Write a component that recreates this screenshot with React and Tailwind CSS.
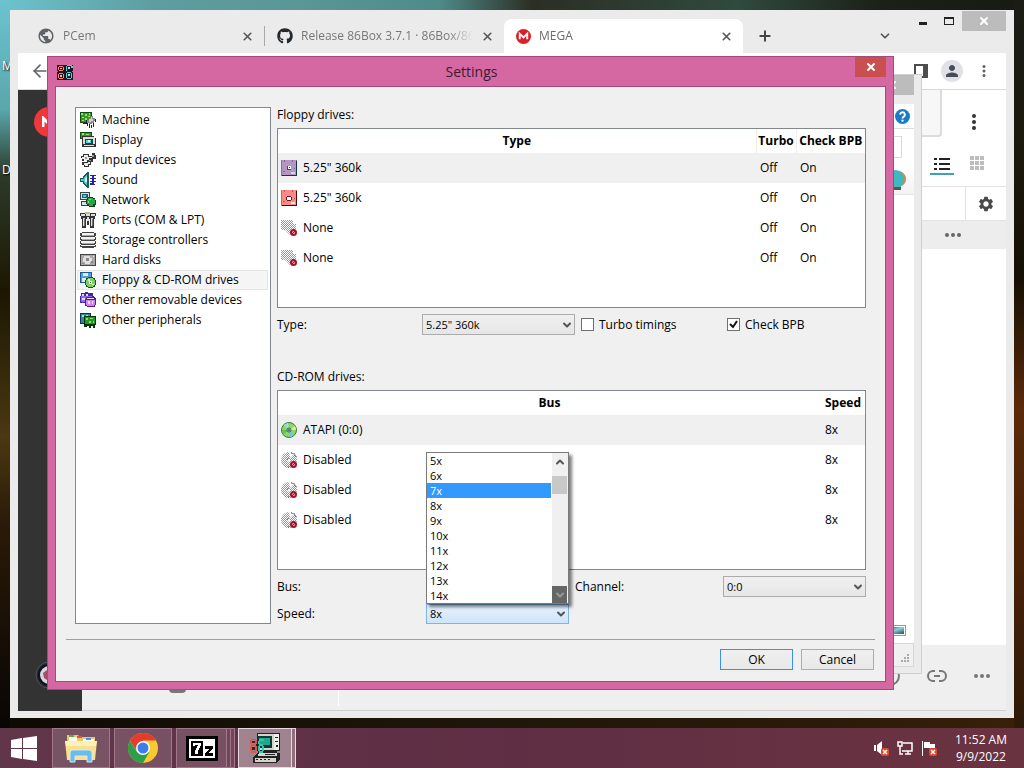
import React from 'react';
import { ArrowLeft, ChevronDown, ChevronUp, Plus, X } from 'lucide-react';
import { FaGithub } from 'react-icons/fa';
import { MdSettings, MdPerson, MdPublic } from 'react-icons/md';

// 16x16 pixel icons, each one a list of [fill, path]
const pixelIcons = {
  machine: [
    ['#0a4d14', 'M0 0h12v11H0z'],
    ['#2a9a32', 'M1 1h10v9H1z'],
    ['#9be35a', 'M1 1h2v2H1zM5 2h2v2H5zM9 1h1v2H9zM5 6h2v2H5z'],
    ['#e8cc30', 'M2 5h2v1H2zM8 4h2v1H8zM2 8h2v1H2z'],
    ['#222', 'M7 11h1v3H7zM9 12h1v4H9zM11 13h1v3h-1zM13 11h1v4h-1zM3 11h5v1H3zM6 8h1v3H6zM15 7h1v3h-1z'],
    ['#8a8a8a', 'M7 8h2V6h2V4h2v2h2v3h-1v2h-2v1H9v-1H7z'],
    ['#d0d0d0', 'M9 7h2V5h1v2h1v2h-2v1H9z'],
  ],
  display: [
    ['#0a4d14', 'M0 0h12v7H0z'],
    ['#2a9a32', 'M1 1h10v5H1z'],
    ['#9be35a', 'M2 1h2v2H2zM6 2h3v1H6z'],
    ['#333', 'M2 4h12v2h2v9H2z'],
    ['#deded6', 'M3 5h11v1h1v6H3zM4 13h10v1H4z'],
    ['#0b4b50', 'M5 7h8v5H5z'],
    ['#58d8d8', 'M6 8h5v3H6z'],
    ['#fff', 'M8 8h2v2H8z'],
  ],
  input: [
    ['#333', 'M3 2h6v2h3V1h3v2h1v4h-3v3h-2v3H9v2H4v-2H2v-3h5V9H2V6H1V4h2z'],
    ['#ececec', 'M4 3h4v2h4v1H9v2H7v1H4V7H2V5h2zM4 11h4v-1h2v2H8v2H5v-1H4z'],
    ['#999', 'M5 5h2v2H5zM12 3h2v2h-2zM9 8h2v1H9z'],
  ],
  sound: [
    ['#1a5a60', 'M0 6h3V4h1V3h1V2h1V1h1V0h2v16H7v-1H6v-1H5v-1H4v-1H3v-2H0z'],
    ['#5ec8c8', 'M1 7h3V5h1V4h1V3h1v10H6v-1H5v-1H4V9H1z'],
    ['#c9f4f0', 'M5 6h1V5h1v5H5z'],
    ['#2424a0', 'M10 3h6v1h-2v2h2v1h-2v2h2v1h-2v2h1v1h-5v-2h2v-1h-2V9h2V7h-2V6h2V4h-2z'],
  ],
  network: [
    ['#344', 'M0 0h10v8H0zM1 9h9v5H1z'],
    ['#d4e4e4', 'M1 1h8v6H1zM2 10h7v3H2z'],
    ['#17606a', 'M2 2h6v4H2z'],
    ['#5ac8d0', 'M3 3h3v2H3z'],
    ['#0b4518', 'M8 5h5v1h2v2h1v5h-1v2h-6v-1H7v-2H6V8h1V6h1z'],
    ['#28a548', 'M8 6h5v1h2v5h-2v2H9v-2H7V8h1z'],
    ['#8be088', 'M9 7h2v1H9zM8 9h1v2H8z'],
  ],
  ports: [
    ['#333', 'M0 1h16v3h-1v3h-1v9h-4V7H9v6H7V7H6v9H2V7H1V4H0z'],
    ['#ddd', 'M1 2h4v2H1zM6 2h4v2H6zM11 2h4v2h-4zM3 6h2v8H3zM11 6h2v8h-2zM7 5h2v4H7z'],
    ['#c8bc80', 'M5 0h5v2H5z'],
    ['#777', 'M4 7h1v7H4zM12 7h1v7h-1z'],
  ],
  storage: [
    ['#444', 'M2 0h12v1h2v3h-1v1h1v3h-1v1h1v3h-1v1h1v2h-2v1H2v-1H0v-2h1v-1H0V9h1V8H0V5h1V4H0V1h2z'],
    ['#f2f2f2', 'M2 1h12v2H2zM1 5h14v2H1zM1 9h14v2H1zM1 13h14v1H1z'],
    ['#aaa', 'M2 3h12v1H2zM2 7h12v1H2zM2 11h12v1H2z'],
  ],
  hdd: [
    ['#444', 'M0 2h16v12H0z'],
    ['#a8a8a8', 'M1 3h14v10H1z'],
    ['#e0e0e0', 'M4 4h6v2h2v4h-2v2H5v-2H3V6h1zM13 4h1v1h-1z'],
    ['#888', 'M6 6h3v3H6zM11 9h2v2h-2zM2 11h2v1H2z'],
  ],
  floppyCd: [
    ['#1f5a94', 'M0 0h12v11H0z'],
    ['#4d9fdc', 'M1 1h10v9H1z'],
    ['#d8ecfa', 'M3 1h5v3H3zM2 6h4v4H2z'],
    ['#17521f', 'M8 5h5v1h2v2h1v5h-1v2h-2v1H8v-1H6v-2H5V8h1V6h2z'],
    ['#7fce6a', 'M8 6h5v1h1v1h1v5h-1v1h-1v1H8v-1H7v-1H6V8h1V7h1z'],
    ['#d8f5c8', 'M8 7h2v2H8zM12 12h2v1h-2z'],
    ['#fff', 'M9 9h3v3H9z'],
    ['#17521f', 'M10 10h1v1h-1z'],
  ],
  removable: [
    ['#4527a0', 'M1 1h4V0h3v1h5v3h1v7H0V4h1z'],
    ['#8a6ee8', 'M1 4h11v6H1z'],
    ['#e0d8ff', 'M2 2h2v2H2zM6 2h2v2H6zM2 6h3v2H2z'],
    ['#5a1a80', 'M6 5h9v1h1v7h-1v2H7v-1H5V7h1z'],
    ['#cf86ec', 'M7 8h8v5h-1v1H7v-1H6V8z'],
    ['#f4dcff', 'M7 6h7v1H7zM8 9h2v3H8zM12 9h1v3h-1z'],
  ],
  peripherals: [
    ['#12305c', 'M0 1h11v11H0z'],
    ['#2b8b9c', 'M1 2h9v9H1z'],
    ['#9fe0e8', 'M2 3h2v2H2zM6 3h2v1H6z'],
    ['#063306', 'M4 4h12v9h-1v3h-2v-2h-2v2H9v-2H7v1H4z'],
    ['#1f9a2a', 'M5 5h10v7H5z'],
    ['#8be060', 'M6 6h2v2H6zM10 6h3v1h-3zM9 9h2v2H9zM13 9h1v2h-1z'],
  ],
  floppyPurple: [
    ['#8a6a9c', 'M0 0h16v16H0z'],
    ['#b595c2', 'M1 0h14v15H1z'],
    ['#7d6490', 'M3 0h1v2H3zM11 0h1v2h-1zM2 11h2v1H2zM13 8h1v1h-1z'],
    ['#c8d8e0', 'M10 12h4v2h-4z'],
    ['#123848', 'M15 1h1v15H1v-1h14z'],
    ['#5a3a60', 'M6 6h4v4H6z'],
    ['#fff', 'M7 6h3v3H7z'],
    ['#5a3a60', 'M8 7h1v1H8z'],
  ],
  floppyRed: [
    ['#d86060', 'M0 0h16v16H0z'],
    ['#f98a88', 'M1 0h14v15H1z'],
    ['#c85050', 'M3 0h1v2H3zM11 0h1v2h-1zM2 11h2v1H2zM13 8h1v1h-1z'],
    ['#fbe4d0', 'M10 12h4v2h-4z'],
    ['#401010', 'M15 1h1v15H1v-1h14z'],
    ['#601818', 'M5 6h6v5H5z'],
    ['#fff', 'M6 7h4v3H6z'],
    ['#f98a88', 'M5 6h1v1H5zM10 6h1v1h-1zM5 10h1v1H5zM10 10h1v1h-1z'],
  ],
  // "86" in two pairs of rings, warm on the left and teal on the right
  app: [
    ['#2a1020', 'M0 1h16v6h-1v1h1v8H0V8h1V7H0z'],
    ['#ff8878', 'M2 2h4v1H2zM1 3h1v3H1zM6 3h1v3H6zM2 6h4v1H2zM2 9h4v1H2zM1 10h1v4H1zM6 10h1v4H6zM2 14h4v1H2z'],
    ['#f4d050', 'M3 4h2v1H3zM3 11h2v2H3z'],
    ['#48d8d8', 'M10 1h5v1h-5zM9 2h1v5H9zM14 2h2v2h-2zM10 8h4v1h-4zM9 9h1v5H9zM14 9h1v5h-1zM10 14h4v1h-4z'],
    ['#9af0e8', 'M11 3h2v2h-2zM11 10h2v2h-2z'],
  ],
};

const sections = [
  ['machine', 'Machine'],
  ['display', 'Display'],
  ['input', 'Input devices'],
  ['sound', 'Sound'],
  ['network', 'Network'],
  ['ports', 'Ports (COM & LPT)'],
  ['storage', 'Storage controllers'],
  ['hdd', 'Hard disks'],
  ['floppyCd', 'Floppy & CD-ROM drives'],
  ['removable', 'Other removable devices'],
  ['peripherals', 'Other peripherals'],
];

const floppyDrives = [
  { icon: 'floppyPurple', type: '5.25" 360k' },
  { icon: 'floppyRed', type: '5.25" 360k' },
  { icon: 'none', type: 'None' },
  { icon: 'none', type: 'None' },
];

const cdromDrives = ['ATAPI (0:0)', 'Disabled', 'Disabled', 'Disabled'];

const speeds = ['5x', '6x', '7x', '8x', '9x', '10x', '11x', '12x', '13x', '14x'];

function PixelIcon({ name }) {
  return (
    <svg className="w-4 h-4 shrink-0" viewBox="0 0 16 16" shapeRendering="crispEdges" aria-hidden="true">
      {pixelIcons[name].map(([fill, d], i) => (
        <path key={i} fill={fill} d={d} />
      ))}
    </svg>
  );
}

// Dithered shape with the red "disabled" badge
function DisabledIcon({ round }) {
  return (
    <svg className="w-4 h-4 shrink-0" viewBox="0 0 16 16" aria-hidden="true">
      <defs>
        <pattern id="dither" width="2" height="2" patternUnits="userSpaceOnUse">
          <rect width="2" height="2" fill="#fff" />
          <path fill="#999" d="M0 0h1v1H0zM1 1h1v1H1z" />
        </pattern>
      </defs>
      {round ? <circle cx="8" cy="8" r="8" fill="url(#dither)" /> : <path d="M0 0h12v4h3v5l-6 6-5-5H0z" fill="url(#dither)" />}
      {round && <path d="M8 0l1 6 4-4zM6 8l2-2 2 2-2 2z" fill="#fff" />}
      {round && <path d="M10 1h2v1h2v2h1v2M6 8l2-2 2 2M7 15h2" fill="none" stroke="#444" strokeDasharray="1 1" />}
      <circle cx="12.500" cy="12.500" r="3.500" fill="#a3142c" />
      <circle cx="12.500" cy="12.500" r="1.500" fill="#f0a0aa" />
      <path d="M11 14l3-3" stroke="#a3142c" strokeWidth="1" />
    </svg>
  );
}

function DiscIcon() {
  return (
    <svg className="w-4 h-4 shrink-0" viewBox="0 0 16 16" aria-hidden="true">
      <circle cx="8" cy="8" r="7.500" fill="#8fd468" stroke="#3f7a3a" />
      <path d="M8 8L3 3a7 7 0 0 1 4-2z" fill="#8fe0ee" />
      <path d="M8 8l5 5a7 7 0 0 1-4 2z" fill="#6cc8e0" />
      <path d="M8 8l6-4a7 7 0 0 1 1 4z" fill="#d4f280" />
      <path d="M8 8l-6 4a7 7 0 0 1-1-4z" fill="#5fbf50" />
      <circle cx="8" cy="8" r="2" fill="#e8f8f0" stroke="#2c5a5a" />
      <circle cx="8" cy="8" r="1" fill="#2c5a5a" />
    </svg>
  );
}

function Dots({ vertical, className }) {
  return (
    <svg className={className} viewBox="0 0 16 16" fill="currentColor" aria-hidden="true">
      <circle cx={vertical ? 8 : 2} cy={vertical ? 2 : 8} r="2" />
      <circle cx="8" cy="8" r="2" />
      <circle cx={vertical ? 8 : 14} cy={vertical ? 14 : 8} r="2" />
    </svg>
  );
}

function MegaIcon({ className }) {
  return (
    <svg className={className} viewBox="0 0 16 16" aria-hidden="true">
      <circle cx="8" cy="8" r="8" fill="#dc1f26" />
      <path d="M4 11V5l4 4 4-4v6" fill="none" stroke="#fff" strokeWidth="2" />
    </svg>
  );
}

function SelectBox({ id, options, value, className, open }) {
  return (
    <div className={`grid items-center ${className}`}>
      <select
        id={id}
        defaultValue={value}
        className={
          open
            ? 'col-start-1 row-start-1 w-full h-5 appearance-none border border-[#7eb4ea] bg-linear-to-b from-[#e6f1fc] to-[#cfe5fb] pl-[3px] text-[11px] leading-4'
            : 'col-start-1 row-start-1 w-full h-[21px] appearance-none border border-[#acacac] bg-linear-to-b from-[#f0f0f0] to-[#e6e6e6] pl-[3px] text-[11px] leading-4'
        }
      >
        {options.map((option) => (
          <option key={option}>{option}</option>
        ))}
      </select>
      <ChevronDown className="col-start-1 row-start-1 justify-self-end mr-[2px] w-3 h-3 text-[#555] pointer-events-none" strokeWidth={4} />
    </div>
  );
}

function BrowserTab({ icon, title, active }) {
  return (
    <div
      className={
        active
          ? 'flex items-center h-[34px] w-[239px] min-w-0 pl-3 pr-[10px] rounded-t-lg bg-white text-[#6b6b6b]'
          : 'flex items-center h-[34px] w-[239px] min-w-0 pl-3 pr-[10px] text-[#777]'
      }
    >
      {icon}
      <span className="flex-1 min-w-0 mx-2 overflow-hidden whitespace-nowrap text-[12px] mask-r-from-85%">{title}</span>
      <button aria-label={`Close ${title}`}>
        <X className="w-[13px] h-[13px] text-[#555]" strokeWidth={3} />
      </button>
    </div>
  );
}

function BrowserWindow() {
  return (
    <div className="absolute inset-[10px] flex flex-col bg-[#ebebeb] px-2 pb-[7px]">
      <div className="flex items-end h-[43px]">
        <div className="flex flex-1 min-w-0 items-end pl-[7px]">
          <BrowserTab icon={<MdPublic className="w-[18px] h-[18px] shrink-0 text-[#5f6368]" />} title="PCem" />
          <div className="h-5 w-px mb-[7px] bg-[#a8a8a8]" />
          <BrowserTab icon={<FaGithub className="w-4 h-4 shrink-0 text-[#24292e]" />} title="Release 86Box 3.7.1 · 86Box/86Box" />
          <BrowserTab icon={<MegaIcon className="w-[15px] h-[15px] shrink-0" />} title="MEGA" active />
          <button aria-label="New tab" className="h-[34px] ml-[14px]">
            <Plus className="w-4 h-4 text-[#444]" strokeWidth={3} />
          </button>
        </div>
        <button aria-label="Search tabs" className="h-[34px] w-[26px] mr-[11px] flex items-center justify-center">
          <ChevronDown className="w-[14px] h-[14px] text-[#555]" strokeWidth={3} />
        </button>
        <div className="flex self-start h-[21px] pt-px">
          <button aria-label="Minimize" className="w-[27px] flex justify-center items-center pt-1">
            <span className="w-2 h-[3px] bg-[#222]" />
          </button>
          <button aria-label="Maximize" className="w-[26px] flex justify-center items-center">
            <span className="w-[10px] h-2 border border-t-2 border-[#222]" />
          </button>
          <button aria-label="Close" className="w-11 flex justify-center items-center bg-[#bcbcbc]">
            <X className="w-3 h-3 text-white" strokeWidth={4} />
          </button>
        </div>
      </div>

      <div className="flex items-center justify-between h-[37px] pl-3 pr-[14px] bg-white border-b border-[#dadada]">
        <ArrowLeft className="w-5 h-5 text-[#5f6368]" />
        <div className="flex items-center gap-[13px]">
          <span className="w-[14px] h-[14px] border-2 border-r-[5px] border-[#4d4d4d]" />
          <span className="w-[22px] h-[22px] rounded-full bg-[#dfe1e6] flex items-center justify-center">
            <MdPerson className="w-[18px] h-[18px] text-[#474c59]" />
          </span>
          <Dots vertical className="w-4 h-3 text-[#5f6368]" />
        </div>
      </div>

      <div className="flex flex-1 min-h-0 bg-white">
        <div className="flex flex-col justify-between w-16 pt-[17px] pb-[22px] pl-4 bg-[#333]">
          <div className="w-[30px] h-[30px] rounded-full bg-[#f0373a] flex items-center pl-2">
            <svg className="w-[14px] h-3" viewBox="0 0 14 12" aria-hidden="true">
              <path d="M1 11V2l6 6 6-6v9" fill="none" stroke="#fff" strokeWidth="3" />
            </svg>
          </div>
          <svg className="w-7 h-7" viewBox="0 0 28 28" aria-hidden="true">
            <circle cx="15" cy="14" r="13" fill="#222636" stroke="#50525c" />
            <circle cx="15" cy="14" r="10" fill="#d6d6de" stroke="#10121e" strokeWidth="2" />
            <path d="M9 12l4-3v10l-3-2z" fill="#a05060" />
          </svg>
        </div>
        <div className="flex flex-col flex-1 border-b border-[#d0d0d0]">
          <div className="flex justify-end h-16 pr-6">
            <div className="w-28 h-[47px] bg-[#f7f7f7] border-r-2 border-b-2 border-[#dcdcdc] rounded-br-sm" />
            <Dots vertical className="self-center ml-6 w-4 h-4 text-[#333]" />
          </div>
          <div className="flex justify-end h-[33px] pr-[17px] gap-[11px] border-b border-[#e2e2e2]">
            <div className="flex items-center justify-center w-6 h-[21px] border-b-2 border-[#3ea3ab]">
              <svg className="w-4 h-[14px]" viewBox="0 0 16 14" fill="#222" aria-hidden="true">
                <path d="M0 1h3v2H0zM5 1h11v2H5zM0 6h3v2H0zM5 6h11v2H5zM0 11h3v2H0zM5 11h11v2H5z" />
              </svg>
            </div>
            <div className="flex items-center justify-center w-6 h-[18px]">
              <svg className="w-[14px] h-[14px]" viewBox="0 0 14 14" fill="#bdbdbd" aria-hidden="true">
                <path d="M0 0h4v4H0zM5 0h4v4H5zM10 0h4v4h-4zM0 5h4v4H0zM5 5h4v4H5zM10 5h4v4h-4zM0 10h4v4H0zM5 10h4v4H5zM10 10h4v4h-4z" />
              </svg>
            </div>
          </div>
          <div className="flex justify-end h-[34px] border-b border-[#e2e2e2]">
            <div className="flex items-center justify-center w-[41px] border-l border-[#e2e2e2]">
              <MdSettings className="w-[18px] h-[18px] text-[#4a4a4a]" />
            </div>
          </div>
          <div className="flex justify-end items-center h-7 pr-[45px] bg-[#ededed]">
            <Dots className="w-4 h-4 text-[#666]" />
          </div>
          <div className="flex-1" />
          <div className="flex items-center h-[65px] pr-4 pb-1 bg-[#efefef]">
            <div className="w-[17px] h-[34px] ml-[87px] rounded-sm bg-[#777]" />
            <div className="self-stretch w-px ml-[152px] bg-white" />
            <div className="flex flex-1 justify-end items-center gap-[27px] text-[#777]">
              <span className="w-5 h-5 rounded-full border-2 border-[#777]" />
              <svg className="w-5 h-5" viewBox="0 0 20 20" fill="none" stroke="currentColor" strokeWidth="2" aria-hidden="true">
                <path d="M8 5H6a5 5 0 0 0 0 10h2M12 5h2a5 5 0 0 1 0 10h-2M7 10h6" />
              </svg>
              <Dots className="w-4 h-4" />
            </div>
          </div>
        </div>
      </div>
    </div>
  );
}

function ExplorerWindow() {
  return (
    <div className="absolute right-[102px] top-[74px] bottom-[54px] w-72 flex flex-col bg-[#ebebeb] border border-[#cfcfcf] pr-[7px] pb-[6px]">
      <div className="flex justify-end h-[29px]">
        <button aria-label="Close" className="w-11 h-5 flex items-center justify-center bg-[#bcbcbc]">
          <X className="w-3 h-3 text-white" strokeWidth={4} />
        </button>
      </div>
      <div className="flex items-center justify-end h-[25px] pr-1 bg-white border-b border-[#ddd]">
        <svg className="w-[15px] h-[15px]" viewBox="0 0 16 16" aria-hidden="true">
          <circle cx="8" cy="8" r="8" fill="#1a7bcb" />
          <path d="M5.500 6a2.500 2.500 0 1 1 3.500 2.300c-.7.300-1 .7-1 1.700" fill="none" stroke="#fff" strokeWidth="2" />
          <circle cx="8" cy="12.500" r="1.200" fill="#fff" />
        </svg>
      </div>
      <div className="h-9 py-[7px] pr-3 bg-white">
        <div className="h-[22px] border border-[#d9d9d9]" />
      </div>
      <div className="flex items-center justify-end h-[30px] pr-2 bg-linear-to-b from-white to-[#f3f3f3] border-b border-[#e4e4e4]">
        <svg className="w-[22px] h-[22px]" viewBox="0 0 22 22" aria-hidden="true">
          <path d="M10 1c7 0 12 4 12 9 0 3-2 6-5 7v4h-7z" fill="#3fb8c0" />
          <path d="M15 2c4 1 7 4 7 8 0 3-2 6-5 7 2-2 3-4 3-7s-2-6-5-8z" fill="#d98a4a" />
          <path d="M10 21v-3h7v3z" fill="#6a5040" />
        </svg>
      </div>
      <div className="flex flex-1 items-end justify-end pr-2 pb-[7px] bg-white">
        <div className="w-6 h-[11px] p-px border border-[#6aa7b8]">
          <div className="h-full bg-linear-to-br from-[#1d3d58] via-[#8fd0dc] to-[#1f5060]" />
        </div>
      </div>
      <div className="flex items-end justify-end h-6 pr-1 pb-1 bg-[#f0f0f0] border border-[#d8d8d8]">
        <svg className="w-2 h-2" viewBox="0 0 8 8" fill="#aaa" aria-hidden="true">
          <path d="M6 0h2v2H6zM3 3h2v2H3zM6 3h2v2H6zM0 6h2v2H0zM3 6h2v2H3zM6 6h2v2H6z" />
        </svg>
      </div>
    </div>
  );
}

function FloppyTable() {
  return (
    <div className="h-[180px] bg-white border border-[#828790]">
      <table className="w-full table-fixed border-collapse" aria-label="Floppy drives">
        <thead>
          <tr className="h-6">
            <th>Type</th>
            <th className="w-10 border-l border-[#eee]">Turbo</th>
            <th className="w-[69px] border-l border-[#eee]">Check BPB</th>
          </tr>
        </thead>
        <tbody>
          {floppyDrives.map((drive, index) => (
            <tr key={index} className={index === 0 ? 'h-[30px] bg-[#f0f0f0]' : 'h-[30px]'}>
              <td className="pl-[3px]">
                <div className="flex items-center gap-[6px]">
                  {drive.icon === 'none' ? <DisabledIcon /> : <PixelIcon name={drive.icon} />}
                  {drive.type}
                </div>
              </td>
              <td className="pl-1">Off</td>
              <td className="pl-1">On</td>
            </tr>
          ))}
        </tbody>
      </table>
    </div>
  );
}

function CdromTable() {
  return (
    <div className="h-[180px] bg-white border border-[#828790]">
      <table className="w-full table-fixed border-collapse" aria-label="CD-ROM drives">
        <thead>
          <tr className="h-6">
            <th>Bus</th>
            <th className="w-11">Speed</th>
          </tr>
        </thead>
        <tbody>
          {cdromDrives.map((drive, index) => (
            <tr key={index} className={index === 0 ? 'h-[30px] bg-[#f0f0f0]' : 'h-[30px]'}>
              <td className="pl-[3px]">
                <div className="flex items-center gap-[6px]">
                  {index === 0 ? <DiscIcon /> : <DisabledIcon round />}
                  {drive}
                </div>
              </td>
              <td className="pl-1">8x</td>
            </tr>
          ))}
        </tbody>
      </table>
    </div>
  );
}

function SpeedPopup() {
  return (
    <div className="absolute left-0 right-0 bottom-full flex bg-white border border-[#7a7a7a] shadow-[3px_3px_3px_rgba(0,0,0,0.5)]">
      <ul role="listbox" aria-label="Speed" className="flex-1 text-[11px] leading-[15px]">
        {speeds.map((speed) => (
          <li
            key={speed}
            role="option"
            aria-selected={speed === '7x'}
            className={speed === '7x' ? 'pl-[3px] mr-px bg-[#3399ff] text-white' : 'pl-[3px]'}
          >
            {speed}
          </li>
        ))}
      </ul>
      <div className="flex flex-col w-4 bg-[#f0f0f0]">
        <span className="h-[17px] flex items-center justify-center">
          <ChevronUp className="w-3 h-3 text-[#555]" strokeWidth={4} />
        </span>
        <span className="h-[18px] mt-[6px] mr-px bg-[#c8c8c8]" />
        <span className="h-[17px] mt-auto mr-px flex items-center justify-center bg-[#666]">
          <ChevronDown className="w-3 h-3 text-[#999]" strokeWidth={4} />
        </span>
      </div>
    </div>
  );
}

function CheckBox({ label, checked, className }) {
  return (
    <label className={`flex items-center gap-[5px] ${className ?? ''}`}>
      <span className="grid place-items-center">
        <input
          type="checkbox"
          defaultChecked={checked}
          className="peer col-start-1 row-start-1 appearance-none w-[13px] h-[13px] bg-white border border-[#707070]"
        />
        <svg className="col-start-1 row-start-1 hidden peer-checked:block w-[11px] h-[11px] pointer-events-none" viewBox="0 0 11 11" aria-hidden="true">
          <path d="M2 5l3 3 4-6" fill="none" stroke="#111" strokeWidth="2" />
        </svg>
      </span>
      {label}
    </label>
  );
}

function SettingsWindow() {
  return (
    <div className="absolute left-[47px] right-[130px] top-[56px] flex flex-col bg-[#d568a2] border border-[#a34a7c] px-[7px] pb-[7px] text-[12px] leading-4 text-black">
      <div className="grid grid-cols-[1fr_auto_1fr] items-center h-[29px] pl-[2px]">
        <PixelIcon name="app" />
        <h1 className="text-[14px] text-[#3c1a30]">Settings</h1>
        <button aria-label="Close" className="justify-self-end self-start w-[31px] h-5 flex items-center justify-center bg-[#c94f51]">
          <X className="w-3 h-3 text-white" strokeWidth={4} />
        </button>
      </div>

      <div className="bg-[#f0f0f0] border border-[#a34a7c] pt-5 pb-[11px]">
        <div className="flex gap-[6px] px-[19px]">
          <ul className="w-[196px] shrink-0 bg-white border border-[#828790] pt-[2px] pl-px pr-[2px]">
            {sections.map(([icon, label]) => (
              <li
                key={label}
                className={
                  icon === 'floppyCd'
                    ? 'flex items-center gap-[6px] h-5 pl-[2px] bg-[#f5f5f5] border border-[#e6e6e6]'
                    : 'flex items-center gap-[6px] h-5 pl-[2px] border border-transparent'
                }
              >
                <PixelIcon name={icon} />
                {label}
              </li>
            ))}
          </ul>

          <div className="flex-1 min-w-0">
            <h2 className="mb-[5px]">Floppy drives:</h2>
            <FloppyTable />
            <div className="flex items-center mt-[6px]">
              <label htmlFor="floppy-type" className="w-[145px]">Type:</label>
              <SelectBox id="floppy-type" className="w-[153px]" value={'5.25" 360k'} options={['None', '5.25" 360k']} />
              <CheckBox label="Turbo timings" className="ml-[6px] w-[146px]" />
              <CheckBox label="Check BPB" checked />
            </div>

            <h2 className="mt-[34px] mb-[5px]">CD-ROM drives:</h2>
            <CdromTable />
            <div className="flex items-center mt-[6px]">
              <span className="flex-1">Bus:</span>
              <label htmlFor="channel" className="w-[148px]">Channel:</label>
              <SelectBox id="channel" className="w-[143px]" value="0:0" options={['0:0', '0:1', '1:0', '1:1']} />
            </div>
            <div className="flex items-center mt-[7px]">
              <label htmlFor="speed" className="w-[149px]">Speed:</label>
              <div className="relative w-[143px]">
                <SelectBox id="speed" value="8x" options={speeds} className="w-full" open />
                <SpeedPopup />
              </div>
            </div>
          </div>
        </div>

        <div className="mt-[15px] mx-[10px] border-t border-[#a0a0a0]" />
        <div className="flex justify-end gap-2 mt-[9px] pr-[11px]">
          <button className="w-[73px] h-[21px] border border-[#3c8ee6] bg-linear-to-b from-[#f0f0f0] to-[#e8e8e8]">OK</button>
          <button className="w-[73px] h-[21px] border border-[#acacac] bg-linear-to-b from-[#f0f0f0] to-[#e8e8e8]">Cancel</button>
        </div>
      </div>
    </div>
  );
}

function RedCross() {
  return (
    <g>
      <rect x="8" y="8" width="8" height="8" rx="2" fill="#e0452f" />
      <path d="M10 10l4 4M14 10l-4 4" stroke="#fff" strokeWidth="1.500" />
    </g>
  );
}

function Taskbar() {
  return (
    <footer className="flex items-stretch justify-between h-10 bg-linear-to-r from-[#61364a] via-[#5f2e44] to-[#6b3340] text-white">
      <div className="flex">
        <button aria-label="Start" className="w-[52px] pl-[11px]">
          <svg className="w-[26px] h-[25px]" viewBox="0 0 26 25" fill="#fff" aria-hidden="true">
            <path d="M0 4l11-2v10H0zM12 2l14-2v12H12zM0 13h11v10L0 21zM12 13h14v12l-14-2z" />
          </svg>
        </button>
        <button aria-label="File Explorer" className="w-[58px] mr-1 border border-[#a07888] bg-white/15 flex items-center justify-center">
          <svg className="w-8 h-[30px]" viewBox="0 0 32 30" aria-hidden="true">
            <path d="M2 2h11l2 2h15v6H2z" fill="#e8c860" />
            <path d="M4 4h8v5H4zM18 6h11v4H18z" fill="#fff" />
            <path d="M4 2h5v2H4z" fill="#4caf50" />
            <path d="M12 3h5v2h-5z" fill="#d9534f" />
            <path d="M21 5h5v2h-5z" fill="#4a90d9" />
            <path d="M0 8h32l-2 19H2z" fill="#f8e08c" />
            <path d="M0 8h32l-1 5H1z" fill="#fdf0b8" />
            <path d="M5 29v-9a3 3 0 0 1 3-3h16a3 3 0 0 1 3 3v9h-5v-6H10v6z" fill="#6cbce8" stroke="#cdeaf8" />
          </svg>
        </button>
        <button aria-label="Chrome" className="w-[58px] mr-1 border border-[#a07888] bg-white/15 flex items-center justify-center">
          <svg className="w-[30px] h-[30px]" viewBox="0 0 30 30" aria-hidden="true">
            <circle cx="15" cy="15" r="15" fill="#fbc82f" />
            <path d="M2 7.500A15 15 0 0 1 28 7.500H15L9 18z" fill="#e33b2e" />
            <path d="M2 7.500A15 15 0 0 0 15 30l6.500-11.300H9z" fill="#2f9e4c" />
            <circle cx="15" cy="15" r="7" fill="#fff" />
            <circle cx="15" cy="15" r="5.500" fill="#3b7ded" />
          </svg>
        </button>
        <button aria-label="7-Zip" className="w-[51px] border border-[#a07888] bg-white/15 flex items-center justify-center">
          <svg className="w-8 h-[25px]" viewBox="0 0 32 25" shapeRendering="crispEdges" aria-hidden="true">
            <path fill="#000" d="M0 0h32v25H0z" />
            <path fill="#fff" d="M3 3h26v19H3z" />
            <path fill="#000" d="M5 5h12v15H5z" />
            <path fill="#fff" d="M7 7h8v3h-1v2h-1v2h-1v4H9v-4h1v-2h1v-2h1v-1H9v1H7z" />
            <path fill="#000" d="M19 10h8v3h-1v1h-1v1h-1v1h-1v1h4v3h-8v-3h1v-1h1v-1h1v-1h1v-1h-4z" />
          </svg>
        </button>
        <span className="w-1 border-y border-r border-[#a07888] bg-white/10" />
        <span className="w-1 mr-[3px] border-y border-r border-[#a07888] bg-white/10" />
        <button aria-label="86Box" className="w-[54px] border border-[#e8d8e0] bg-white/40 flex items-center justify-center">
          <svg className="w-8 h-8" viewBox="0 0 32 32" shapeRendering="crispEdges" aria-hidden="true">
            <path fill="#222" d="M8 1h23v18h-3v2h3v7h-1v1h-1v1h-1v1H4v-6h1v-1h1v-1h1v-1h1v-1h1v-2H7z" />
            <path fill="#d4d4cc" d="M9 2h16v2H9zM23 4h2v14h-2zM11 16h12v2H11zM10 21h18v3H9zM6 26h21v4H6z" />
            <path fill="#f0f0ea" d="M25 2h5v16h-5z" />
            <path fill="#0a3a3a" d="M9 4h14v12H9z" />
            <path fill="#1fa88c" d="M10 6h11v7H10z" />
            <path fill="#222" d="M26 5h3v1h-3zM26 9h3v1h-3zM27 13h2v2h-2zM16 22h10v1H16zM7 27h2v1H7zM11 27h2v1h-2zM15 27h2v1h-2zM19 27h2v1h-2z" />
            <path fill="#e0544a" d="M2 7h5v1H2zM1 8h2v4H1zM6 8h2v4H6zM2 12h5v2H2zM1 14h2v5H1zM6 14h2v5H6zM2 19h5v2H2z" />
            <path fill="#5a1414" d="M3 9h3v2H3zM3 15h3v3H3z" />
            <path fill="#2cc8b4" d="M10 7h5v2h-5zM9 9h2v3H9zM10 12h4v2h-4zM9 14h2v5H9zM13 14h2v5h-2zM10 19h4v2h-4z" />
          </svg>
        </button>
        <span className="w-1 border-y border-r border-[#e8d8e0] bg-white/30" />
      </div>
      <div className="flex items-center gap-2 pr-[17px]">
        <svg className="w-4 h-4" viewBox="0 0 16 16" aria-hidden="true">
          <path d="M1 5h2v6H1zM4 5l5-4v14l-5-4z" fill="#fff" />
          <RedCross />
        </svg>
        <svg className="w-4 h-4" viewBox="0 0 16 16" fill="none" stroke="#fff" aria-hidden="true">
          <path d="M6 3h9v8H5M8 14h6M11 11v3M1 2h4v4H1zM3 6v8h3" strokeWidth="1.500" />
        </svg>
        <svg className="w-4 h-4" viewBox="0 0 16 16" aria-hidden="true">
          <path d="M1 1h1v15H1zM3 2h6v2h5v6H9V8H3z" fill="#fff" />
          <RedCross />
        </svg>
        <div className="ml-[10px] text-center text-[12px] leading-[17px]">
          <div>11:52 AM</div>
          <div>9/9/2022</div>
        </div>
      </div>
    </footer>
  );
}

export default function App() {
  return (
    <div className="min-h-screen flex flex-col font-['Open_Sans','Noto_Sans',sans-serif]">
      <main className="relative flex-1 min-h-[700px] overflow-hidden [background:linear-gradient(#6cc3cf,#5aa7ad_15%,#2c3a28_24%,#1c1703_40%,#4a3812_60%,#2a1a08_72%,#080604)_left/10px_100%_no-repeat,linear-gradient(#1a1c16,#1a1a0c_20%,#160f04_38%,#5a2a0a_56%,#4a2208_75%,#2e1a08)_right/10px_100%_no-repeat,linear-gradient(90deg,#0e0a04,#1c1608_40%,#2a1a0a_80%,#3a2008)_bottom/100%_10px_no-repeat,linear-gradient(90deg,#6cc3cf,#5e9ea0_15%,#5a9696_30%,#4e8a88_43%,#2c2e24_52%,#2f4a40_72%,#1c2018_86%,#181a14)]">
        <div className="absolute left-[2px] top-[58px] text-[12px] leading-4 text-white [text-shadow:1px_1px_2px_#000]">M</div>
        <div className="absolute left-[2px] top-[162px] text-[12px] leading-4 text-white [text-shadow:1px_1px_2px_#000]">D</div>
        <BrowserWindow />
        <ExplorerWindow />
        <SettingsWindow />
      </main>
      <Taskbar />
    </div>
  );
}
